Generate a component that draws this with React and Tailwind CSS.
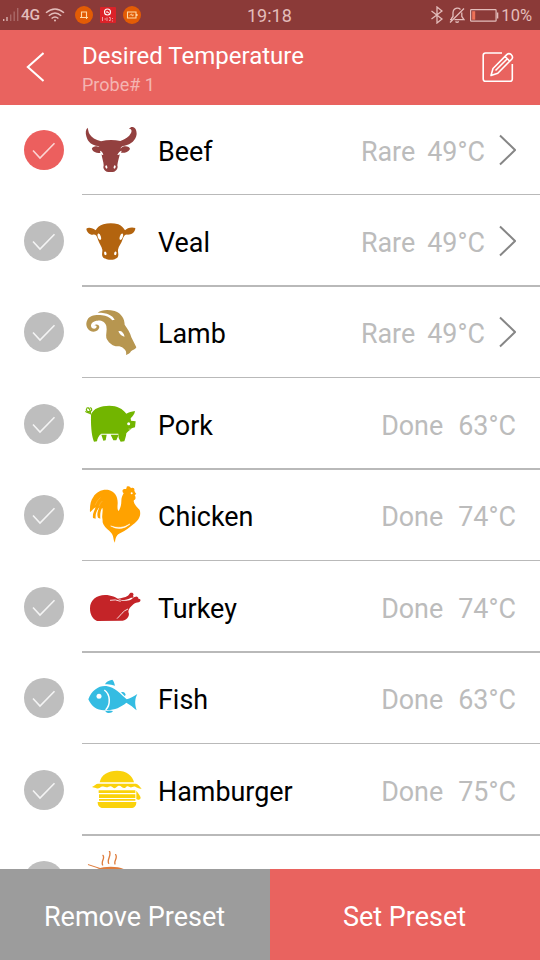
const icons = {
  beef: (
    <svg viewBox="216 30 180 180" className="h-[60px] w-[60px] shrink-0">
      <g fill="#93403f">
        <path d="M233 53 C227 58 226 68 229 79 C233 97 247 107 264 108 C268 110 270 113 272 119 C274 112 264 109 257 109 C249 110 244 115 246 118 C250 128 264 131 274 128 C276 145 281 156 281 166 C278 174 282 181 290 185 Q302 187 313 185 C320 181 325 174 322 166 C323 154 328 142 330 128 C342 130 355 127 360 117 C360 111 350 107 342 109 C337 110 334 114 332 116 C332 110 336 108 344 107 C363 103 378 91 380 72 C380 58 374 50 364 51 L356 56 C365 56 366 62 363 69 C357 81 346 88 331 93 C312 89 292 89 273 94 C256 90 245 82 239 73 C235 66 235 60 233 53Z" />
      </g>
      <g fill="#fff">
        <path d="M270 122 Q278 124 280 135 Q272 136 270 122Z M335 122 Q326 124 322 135 Q332 136 335 122Z" />
        <ellipse cx="289" cy="171" rx="3" ry="5" transform="rotate(-18 289 171)" />
        <ellipse cx="314" cy="171" rx="3" ry="5" transform="rotate(18 314 171)" />
      </g>
    </svg>
  ),
  veal: (
    <svg viewBox="216 33 180 180" className="h-[60px] w-[60px] shrink-0">
      <path
        fill="#b3640f"
        d="M229 86 C235 81 249 84 257 91 C262 82 269 77 280 73 Q302 66 325 73 C336 77 340 84 345 91 C351 84 364 80 376 84 C376 97 365 104 353 104 C345 103 341 108 338 118 C334 131 326 138 324 149 C323 158 328 165 322 173 C318 175 316 176 314 178 Q303 181 290 178 C287 175 283 175 280 173 C273 166 278 157 277 149 C275 138 268 131 264 119 C261 108 257 102 248 104 C238 104 230 96 229 86Z"
      />
      <g fill="#fff">
        <ellipse cx="268" cy="110" rx="4.5" ry="10" transform="rotate(-18 268 110)" />
        <ellipse cx="334" cy="110" rx="4.5" ry="10" transform="rotate(18 334 110)" />
        <ellipse cx="286" cy="160" rx="3.5" ry="5.5" transform="rotate(-15 286 160)" />
        <ellipse cx="316" cy="160" rx="3.5" ry="5.5" transform="rotate(15 316 160)" />
      </g>
    </svg>
  ),
  lamb: (
    <svg viewBox="216 36 180 180" className="h-[60px] w-[60px] shrink-0">
      <path
        fill="#b79650"
        d="M263 68 C274 59 294 58 314 63 C335 70 344 88 344 104 C352 116 361 128 364 142 L379 172 C377 178 368 180 363 184 C360 190 356 192 348 195 C350 188 348 180 340 175 C334 169 327 168 317 169 C305 166 294 156 289 144 C287 133 292 121 289 108 C285 95 274 91 263 92 C251 92 243 99 243 107 C243 115 253 119 258 114 C262 110 260 106 253 106 C258 101 269 104 268 112 C266 124 251 129 240 122 C229 115 226 101 232 90 C239 76 258 74 276 76 C289 77 299 82 307 91 L314 89 C307 76 294 68 263 68Z"
      />
      <path fill="#fff" d="M325 124 Q338 120 344 140 Q331 139 325 124Z" />
    </svg>
  ),
  pork: (
    <svg viewBox="216 42 180 180" className="h-[60px] w-[60px] shrink-0">
      <path
        fill="#72b500"
        d="M243 104 C250 85 272 77 298 77 C322 77 338 86 349 101 C356 98 365 94 375 93 C374 102 368 109 362 115 L363 122 L377 124 L375 142 L367 144 C360 151 353 154 349 160 C348 169 346 176 343 184 L332 185 L326 174 L325 161 L274 161 C266 167 262 175 261 184 L252 185 C247 172 242 151 243 104Z"
      />
      <path d="M274 164 L290 164 L287 181 L280 182Z M302 164 L326 164 L319 181 L310 181Z" fill="#72b500" />
      <path d="M241 103 C243 91 236 80 231 84 C226 91 232 97 242 94 C249 90 243 82 240 84 M226 94 C232 99 239 98 244 102" fill="none" stroke="#72b500" strokeWidth="3.5" />
      <circle cx="356" cy="131" r="4.5" fill="#fff" />
      <path d="M356 147 Q361 149 366 146" fill="none" stroke="#fff" strokeWidth="1.5" />
    </svg>
  ),
  chicken: (
    <svg viewBox="216 30 180 180" className="h-[60px] w-[60px] shrink-0">
      <path
        fill="#ffa200"
        d="M240 112 C239 92 242 77 250 66 C259 50 278 42 296 45 C315 49 324 66 323 86 C322 98 322 105 326 108 C331 100 334 91 334 79 C334 68 337 62 341 55 C335 50 337 43 343 42 C349 43 350 40 350 35 C357 31 362 36 363 40 C370 36 375 41 373 47 L376 53 L379 57 L374 60 C379 68 376 76 372 75 L371 78 C373 90 382 96 389 105 C395 123 384 138 370 148 C357 158 347 168 333 173 C320 178 316 187 315 203 C309 195 312 183 304 174 C296 164 286 159 281 149 C276 143 279 138 277 130 C275 119 280 108 277 98 C271 106 270 119 271 131 L264 128 C259 117 265 104 268 97 C258 108 256 119 257 131 L249 129 C247 116 253 107 257 97 C249 102 245 107 240 112Z"
      />
      <path fill="#fff" d="M302 153 Q333 164 360 147 Q333 171 302 153Z" stroke="#fff" strokeWidth="1.5" />
      <circle cx="365" cy="55" r="3" fill="#fff" />
      <path d="M255 91 Q261 76 271 68 M267 94 Q270 84 277 78" fill="none" stroke="#fff" strokeWidth="1" opacity=".5" />
    </svg>
  ),
  turkey: (
    <svg viewBox="216 36 180 180" className="h-[60px] w-[60px] shrink-0">
      <g fill="#c42428">
        <path d="M240 130 C240 105 260 90 285 90 C304 90 318 97 331 106 C343 109 355 107 362 104 C368 101 371 95 375 96 C379 92 386 96 385 101 C394 100 393 110 386 112 C380 114 376 113 371 117 C362 125 355 132 355 141 C361 150 352 165 338 167 L261 168 C247 162 240 148 240 130Z" />
        <path d="M323 101 C336 99 346 97 352 93 C358 91 357 83 364 83 C369 82 373 88 369 92 C373 97 368 99 363 98 C356 102 346 105 335 105Z" />
      </g>
      <path d="M300 106 Q316 102 332 109 M354 132 C339 137 332 151 321 161" fill="none" stroke="#fff" strokeWidth="2.5" />
    </svg>
  ),
  fish: (
    <svg viewBox="216 39 180 180" className="h-[60px] w-[60px] shrink-0">
      <g fill="#34bce2">
        <path d="M235 133 C245 105 267 91 289 93 C314 96 332 117 350 133 C360 130 371 124 382 117 C374 132 374 147 380 166 C371 158 360 149 349 143 C332 157 315 165 292 165 C267 169 246 159 235 133Z" />
        <path d="M285 88 C288 81 295 76 307 74 C312 78 313 85 315 92 Q300 86 285 88Z" />
        <path d="M333 112 C342 108 346 114 347 120 L344 123Z M286 168 Q298 165 309 168 C306 175 290 177 286 168Z" />
      </g>
      <path d="M283 105 C302 118 302 150 287 165" fill="none" stroke="#fff" strokeWidth="4.5" />
      <circle cx="267" cy="124" r="7.5" fill="#fff" />
    </svg>
  ),
  hamburger: (
    <svg viewBox="216 30 180 180" className="h-[60px] w-[60px] shrink-0">
      <g fill="#fad20c">
        <path d="M269 97 C273 74 295 62 321 62 C348 62 368 76 372 97Z" />
        <path d="M246 111 C254 107 258 101 264 101 L378 101 C386 102 389 110 395 116 C387 117 382 113 376 110 C367 108 365 115 359 111 C353 106 349 109 346 113 C338 118 333 104 324 108 C317 112 315 118 308 112 C299 104 296 113 289 112 C280 110 277 107 270 113 C262 118 256 113 246 111Z" />
        <path d="M266 121 H376 V129 H266Z M267 133 H376 V144 H267Z M267 147 H376 V152 H267Z M263 156 H379 C379 168 373 174 363 174 H279 C268 174 263 167 263 156Z M379 122 C385 130 392 138 392 144 C390 150 384 151 379 147Z" />
      </g>
    </svg>
  ),
  custom: (
    <svg viewBox="216 303 180 180" className="h-[60px] w-[60px] shrink-0">
      <g fill="none" stroke="#df7c3c" strokeLinecap="round">
        <path strokeWidth="4" d="M279 316 C286 326 272 334 278 345 M298 303 C306 316 290 327 296 340 M317 314 C324 324 311 332 315 342" />
        <path strokeWidth="3" d="M235 344 L275 357" />
      </g>
      <path fill="#df7c3c" d="M261 357 C284 348 322 348 341 357 L336 400 H266Z" />
    </svg>
  ),
};

const presets = [
  { name: "Beef", icon: "beef", level: "Rare", temp: "49°C", more: true, selected: true },
  { name: "Veal", icon: "veal", level: "Rare", temp: "49°C", more: true },
  { name: "Lamb", icon: "lamb", level: "Rare", temp: "49°C", more: true },
  { name: "Pork", icon: "pork", level: "Done", temp: "63°C" },
  { name: "Chicken", icon: "chicken", level: "Done", temp: "74°C" },
  { name: "Turkey", icon: "turkey", level: "Done", temp: "74°C" },
  { name: "Fish", icon: "fish", level: "Done", temp: "63°C" },
  { name: "Hamburger", icon: "hamburger", level: "Done", temp: "75°C" },
  { name: "", icon: "custom", level: "", temp: "" },
];

function rowHeight(i) {
  if (i === 0) return "h-[90px] pt-[25px]";
  return i % 2 ? "h-[92px] pt-[26px]" : "h-[91px] pt-[25px]";
}

function PresetRow({ preset, index }) {
  return (
    <li className="flex shrink-0 pl-6">
      <div className={`shrink-0 pr-[18px] ${rowHeight(index)}`}>
        <div className={`h-10 w-10 rounded-full ${preset.selected ? "bg-[#ec5f5e]" : "bg-[#bebebe]"}`}>
          <svg viewBox="0 0 40 40" className="h-10 w-10" fill="none" stroke={preset.selected ? "#fbd5d3" : "#f4f4f4"} strokeWidth="1.6">
            <path d="M9 20.5 L16 28 L30.5 13.3" />
          </svg>
        </div>
      </div>
      <div className={`flex min-w-0 flex-1 items-start border-[#b9b9b9] ${index % 2 ? "border-b-2" : "border-b"} ${rowHeight(index)}`}>
        <div className="flex h-10 flex-1 items-center">
          {icons[preset.icon]}
          <span className="ml-4 flex-1 pt-[5px] text-[26.9px] leading-none text-black">{preset.name}</span>
          <div className={`flex pt-[5px] text-[26.9px] leading-none text-[#bcbcbc] ${preset.more ? "gap-3" : "gap-[15px] pr-[24px]"}`}>
            <span>{preset.level}</span>
            <span>{preset.temp}</span>
          </div>
          {preset.more && (
            <svg viewBox="0 0 18 32" className="ml-[13px] mr-[24px] h-8 w-[18px]" fill="none" stroke="#868686" strokeWidth="2">
              <path d="M2 1.5 L17 16 L2 30.5" />
            </svg>
          )}
        </div>
      </div>
    </li>
  );
}

function StatusBar() {
  return (
    <div className="flex h-[30px] shrink-0 items-center bg-[#8b3a38] text-[#e3bdbb]">
      <svg viewBox="0 0 16 14" className="ml-[3px] h-[14px] w-4" fill="#d8b0ae">
        <path d="M0 11h1.4v2H0zM3.3 9h1.4v4H3.3z" />
        <path opacity=".4" d="M7 6.5h1.4V13H7zM10.5 3.5h1.4V13h-1.4zM14 0h1.4v13H14z" />
      </svg>
      <span className="ml-[2px] w-[20px] pt-px text-[15.5px] font-medium leading-none tracking-[-0.3px]">4G</span>
      <svg viewBox="0 0 20 14" className="ml-[4px] h-[14px] w-5" fill="none" stroke="#e3bdbb" strokeWidth="1.4">
        <path d="M1 4.8 Q10 -3 19 4.8 M3.8 7.8 Q10 2.3 16.2 7.8 M6.6 10.5 Q10 7.4 13.4 10.5" />
        <circle cx="10" cy="12.6" r="1" fill="#e3bdbb" stroke="none" />
      </svg>
      <svg viewBox="0 0 18 18" className="ml-[10px] h-[18px] w-[18px]" fill="none">
        <circle cx="9" cy="9" r="9" fill="#e35c05" />
        <path d="M6.5 11.5 V6 H11.5 V13 M5 11.5 H13" stroke="#ffd9a8" strokeWidth="1.1" />
      </svg>
      <svg viewBox="0 0 16 16" className="ml-[7px] h-4 w-4" fill="none">
        <rect width="16" height="16" rx="1" fill="#dc2229" />
        <circle cx="7.5" cy="5" r="3" stroke="#fff" strokeWidth="1.1" />
        <path d="M7.5 5 l2 1.5 M6 5h2" stroke="#fff" strokeWidth="1" />
        <path d="M2.5 10v4 M4.5 12h1.5 M7 10.5v3.5 M9 10.5h1.3v3H9 M12 11.5h1 M12 14h1" stroke="#fff" strokeWidth=".7" opacity=".8" />
      </svg>
      <svg viewBox="0 0 18 18" className="ml-[7px] h-[18px] w-[18px]" fill="none">
        <circle cx="9" cy="9" r="9" fill="#e35c05" />
        <path d="M4.5 6 H13 V12 H4.5Z M14 8v2" stroke="#ffd9a8" strokeWidth="1.1" />
        <path d="M6.5 9.3 L9 7.9 V10 L11 8.7" stroke="#ffd9a8" strokeWidth=".8" />
      </svg>
      <span className="ml-[106px] w-[48px] pt-[2px] text-[18px] leading-none">19:18</span>
      <div className="ml-auto flex items-center pr-[8px]">
        <svg viewBox="0 0 12 18" className="h-[18px] w-3" fill="none" stroke="#e3bdbb" strokeWidth="1.3">
          <path d="M.5 5 L11 13 L6 17 V1 L11 5 L.5 13" />
        </svg>
        <svg viewBox="0 0 16 18" className="ml-[6px] h-[18px] w-4" fill="none" stroke="#e3bdbb" strokeWidth="1.3">
          <path d="M1 16.5 L15 2.5 M2.5 13 V12.5 L4 10.5 V6.5 Q4.3 2.7 8 2.2 Q10 2 11.5 3.4 M12.8 6.5 V10.5 L15 13.6 H5.5 M6.5 15.5 Q8 17 9.8 15.5 M1 13.6 H3" />
        </svg>
        <svg viewBox="0 0 29 13" className="ml-[5px] h-[13px] w-[29px]" fill="none">
          <rect x=".6" y=".6" width="25.5" height="11.6" rx=".8" stroke="#e3bdbb" strokeWidth="1.2" />
          <path d="M27.6 3.5v6" stroke="#e3bdbb" strokeWidth="1.4" />
          <rect x="2.2" y="2.2" width="3" height="8.5" fill="#ee7157" />
        </svg>
        <span className="ml-[2px] pt-[2px] text-[16.5px] leading-none">10%</span>
      </div>
    </div>
  );
}

export default function App() {
  return (
    <div className="flex h-[960px] w-[540px] flex-col overflow-hidden bg-white font-[Roboto,sans-serif]">
      <StatusBar />
      <header className="flex h-[75px] shrink-0 items-start bg-[#e9635f] text-white">
        <svg viewBox="0 0 18 30" className="ml-[26px] mt-[22px] h-[30px] w-[18px]" fill="none" stroke="#fff" strokeWidth="2">
          <path d="M17.5 1 L1.8 15 L17.5 29" />
        </svg>
        <div className="ml-[38px] flex flex-1 flex-col pt-[13px]">
          <h1 className="text-[24px] leading-[26px]">Desired Temperature</h1>
          <p className="mt-[5px] text-[18px] leading-[22px] text-[#f4b5b2]">Probe# 1</p>
        </div>
        <svg viewBox="0 0 32 32" className="mr-[26px] mt-[21px] h-8 w-8" fill="none" stroke="#fff" strokeWidth="1.6" strokeLinejoin="round">
          <path d="M20 2 H3.5 Q1.2 2 1.2 4.3 V28 Q1.2 30.3 3.5 30.3 H28 Q30.3 30.3 30.3 28 V13" />
          <path d="M9 24.5 L11 17.5 L25 3.4 Q27 1.7 29.3 3.7 Q31.5 6 29.7 8.2 L15.8 22.3 Z M23 5.5 L27.8 10.2 M13.5 19.5 L25.3 7.7" />
        </svg>
      </header>
      <ul className="flex min-h-0 flex-1 flex-col overflow-hidden">
        {presets.map((preset, i) => (
          <PresetRow key={preset.icon} preset={preset} index={i} />
        ))}
      </ul>
      <footer className="grid h-[91px] shrink-0 grid-cols-2 text-[27px] leading-none text-white">
        <button className="bg-[#9c9c9c] pt-[5px] pr-px">Remove Preset</button>
        <button className="bg-[#e9635f] pt-[5px] pr-px">Set Preset</button>
      </footer>
    </div>
  );
}
